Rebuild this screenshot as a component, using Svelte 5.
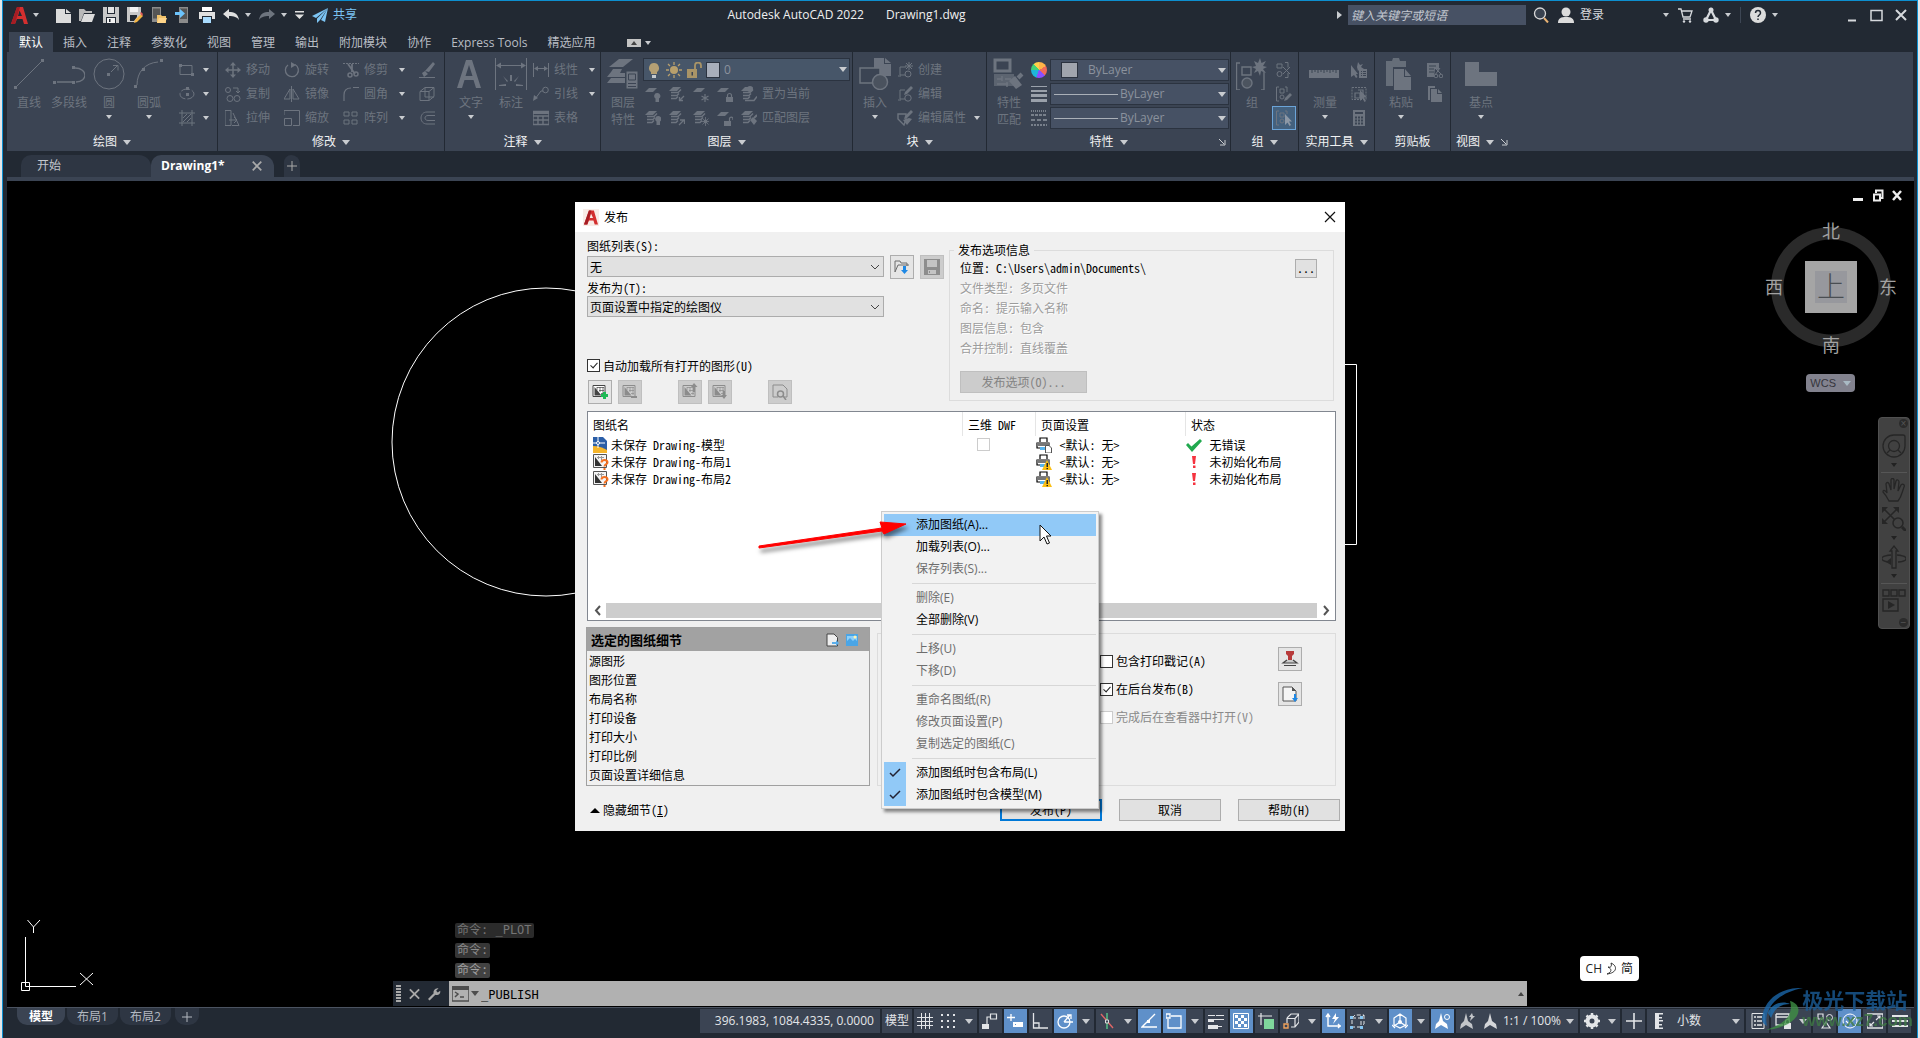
<script lang="ts">
    // stroke-only helper, keeps the icon table short
    const s = (d: string, w = 1, extra = '') =>
        `<path d="${d}" fill="none" stroke="currentColor" stroke-width="${w}" ${extra}/>`;
    const f = (d: string, color = 'currentColor') => `<path d="${d}" fill="${color}"/>`;
    const dots = (pts: number[][]) => pts.map(([x, y]) => f(`M${x} ${y}h3v3h-3z`)).join('');
    const sheet = s('M2 2.5h12v11H2z') + f('M3.5 4v8.500h7z') + s('M6 4v3M9 4v5M12 4v8M6 4.500h7M8 7.500h5M10 10.500h3', 1, 'opacity=".7"');
    const brush = f('M9 10l3-3 4 4-3 4z') + s('M13 8l3-3', 2);
    const layers = (y: number) => f(`M4 ${y}h8l-4 4H0z`);
    const stack = layers(1) + s('M2 6.500h7l3-3M2 9.500h6l2-2M2 12.500h5l2-2', 1.5);

    const icons: Record<string, string> = {
        // quick access
        logo: f('M6 0h6l5 17h-4l-1.500-5H6l-2 5H0zM8.500 3.500L7 9h4z', '#d32f2f') + f('M6 0h3L4 17H0z', '#a61d24'),
        new: f('M1 2h9v5h6v9H1z', '#dcdcdc') + f('M11 2l5 4h-5z', '#dcdcdc'),
        open: f('M0 2h5l2 2h6v2H5l-3 8H0z', '#b9b9b9') + f('M5 7h11l-3 8H2z', '#dcdcdc'),
        save: f('M0 0h16v16H0z', '#c8c8c8') + f('M4 0h8v7H4z', '#222933') + f('M5 0h6v6H5z', '#e4e4e4') + f('M3 10h10v6H3z', '#222933') + f('M4 11h8v5H4z', '#f2f2f2') + f('M6 12h1.500v3H6z', '#222933'),
        saveas: f('M0 0h14v8l-6 7H0z', '#c8c8c8') + f('M3 0h8v5H3z', '#f2f2f2') + f('M3 8h7v2l-3 4H3z', '#222933') + f('M8 13l6-6 2 2-6 6-3 1z', '#f4b544') + f('M13 6l1-1 2 2-1 2z', '#e35a5a'),
        openmobile: f('M1 0h9v15H1z', '#8b8b8b') + f('M2 1.500h7v10H2z', '#555') + f('M6 8h4l1 1h4v7H6z', '#f0c26a') + f('M8 11h8l-2 5H6z', '#ffd58a'),
        savemobile: f('M4 0h9v16H4z', '#8b8b8b') + f('M5 1.500h7v10.500H5z', '#555') + f('M0 5h5V2l5 4.500L5 11V8H0z', '#6cc3fb'),
        print: f('M3 0h10v4H3zM0 5h16v7h-3V9H3v3H0z', '#e0e0e0') + f('M4 10h8v6H4z', '#a9dcff') + f('M3 0h10v4H3z', '#fff'),
        undo: f('M0 7l6-5v3c5 0 9 1.500 10 8-2-3-5-4-10-4v3z', '#e0e0e0'),
        redo: f('M16 7l-6-5v3c-5 0-9 1.500-10 8 2-3 5-4 10-4v3z', '#6d747e'),
        custom: f('M0 4h9v1.500H0zM0 7.500h9L4.500 12z', '#e0e0e0'),
        plane: f('M16 1L0 9l4 2zM16 1L5 11.500V16l3-3zM16 1L9 13l4 2z', '#7cc4f4'),
        mag: '<circle cx="7" cy="6.500" r="5.500" fill="#39424f" stroke="#d8d8d8" stroke-width="1.300"/><path d="M11 11l4 4.500" stroke="#e9b273" stroke-width="2"/>',
        user: '<circle cx="8" cy="5" r="4.500" fill="#dcdcdc"/>' + f('M0 16c0-5 3-6 8-6s8 1 8 6z', '#dcdcdc'),
        cart: s('M0 2h3l2 8h7l2-6H4M5 12h8', 1.3) + '<circle cx="6" cy="14.500" r="1.200" fill="currentColor"/><circle cx="12" cy="14.500" r="1.200" fill="currentColor"/>',
        a360: s('M8 3L3 13h10z', 2.2) + '<circle cx="8" cy="3" r="2.500" fill="currentColor"/><circle cx="3" cy="13" r="2.700" fill="currentColor"/><circle cx="13" cy="13" r="2.700" fill="currentColor"/>',
        help: '<circle cx="8" cy="8" r="8" fill="#dcdcdc"/><path d="M5.500 6c0-3.500 5-3.500 5 0 0 2-2.500 2-2.500 4M8 11.500v1.500" stroke="#222933" stroke-width="1.500" fill="none"/>',
        min: s('M2 12.500h8', 2), max: s('M1 2.500h11v10H1z', 1.5), x: s('M2 2l10 10M12 2L2 12', 2),
        // draw
        line: s('M4 28L28 4') + dots([[1, 28], [28, 1]]),
        pline: s('M4 24h16M22 10c13 0 13 14 1 14', 1.3) + dots([[0, 23], [19, 23], [19, 8]]),
        circle: '<circle cx="16" cy="16" r="15" fill="none" stroke="currentColor"/>' + s('M18 14l6-6M20 7.500h5v5') + dots([[14, 15]]),
        arc: s('M4 27C4 14 12 5 25 4') + dots([[1, 27], [9, 10], [27, 1]]),
        rect: s('M1 3.500h12v9H1z') + dots([[0, 2], [12, 11]]),
        ellipse: '<ellipse cx="8" cy="8" rx="7" ry="5" fill="none" stroke="currentColor" stroke-dasharray="9 2"/>' + dots([[7, 7], [7, 1]]),
        hatch: s('M3 0v16M13 0v16M0 3h16M0 13h16') + s('M4 8l4-4M4 12l8-8M8 12l4-4'),
        // modify
        move: s('M8 2v12M2 8h12', 1.5) + f('M8 0l3 3.500H5zM8 16l3-3.500H5zM0 8l3.500-3v6zM16 8l-3.500-3v6z'),
        rotate: s('M11 2.500A6.500 6.500 0 1 1 4 3', 1.3) + f('M7 0v6l5-3z'),
        trim: s('M0 1.500h16', 1, 'stroke-dasharray="2 1"') + s('M5 2l7 10M9 2v8', 1.8) + '<circle cx="7" cy="13" r="2" fill="none" stroke="currentColor" stroke-width="1.500"/><circle cx="13" cy="12" r="2" fill="none" stroke="currentColor" stroke-width="1.500"/>',
        erase: f('M14 0l2 2-6 8-4-1zM3 11l3-2 3 3-4 3z') + s('M0 15.500h16'),
        copy: '<circle cx="3" cy="4" r="2.500" fill="none" stroke="currentColor"/><circle cx="5" cy="12.500" r="3" fill="none" stroke="currentColor"/><circle cx="12" cy="12.500" r="3" fill="none" stroke="currentColor"/>' + s('M8 2h5v5M11 5l2 2 2-2'),
        mirror: s('M7.500 0v16') + s('M6 3v10H0zM9 3v10h6z'),
        fillet: s('M1 15V9c0-5 3-7 7-7M10 1.500h6M1 15', 1.2),
        explode: s('M1 5.500h9v9H1zM1 5.500l5-4h9l-5 4M15 1.500v9l-5 4M6 2v9h9'),
        stretch: s('M0 .500h6v15H0zM8 3l6 12.500H7') + s('M4 10h8M9 7l3 3-3 3'),
        scale: s('M0 5V.500h15.500v15H9M.500 8.500h7v7h-7z'),
        array: s('M1 2h5v4H1zM9 2h5v4H9zM1 10h5v4H1zM9 10h5v4H9z'),
        offset: s('M16 2H8c-8 0-8 12 0 12h8M16 5.500H9c-4 0-4 5 0 5h7'),
        // annotate
        text: f('M11 2h6l9 28h-5l-2.500-8h-9L7 30H2zM14 7l-3.500 11h7z'),
        dim: s('M.500 0v32M31.500 0v32M2 7.500h28') + f('M1 7.500l5-3v6zM31 7.500l-5-3v6zM15 17h2v6h-2zM8 18l5 5-1 1zM24 18l-5 5 1 1zM4 27l7-1v2H4zM28 27l-7-1v2h7z'),
        linear: s('M.500 1v14M15.500 1v14M2 6.500h12') + f('M1 6.500l4-2.500v5zM15 6.500L11 4v5z'),
        leader: '<circle cx="12.500" cy="4" r="2.800" fill="none" stroke="currentColor"/>' + s('M10 5H8L2 13') + f('M0 15l1-6 4 3z'),
        table: s('M0 1.500h16v13H0zM0 6h16M0 10h16M5 6v8M10 6v8', 1.4) + f('M0 1h16v3H0z'),
        // layers
        layerprop: f('M12 1h14l-10 8H2z') + f('M6 11h9l-2 4h5v4H0l4-5zM4 20h14v5H0z') + '<path d="M19 13h12v18H19z" fill="currentColor" stroke="#3b4453"/>' + '<path d="M21.500 16h7v6h-7zM21 25.500h8M21 28.500h8" fill="none" stroke="#3b4453"/>',
        bulb: f('M8 1a5 5 0 0 1 3 9v2H5v-2a5 5 0 0 1 3-9z', '#b5a074') + f('M6 13h4v3H6z', '#c4c9ce'),
        sun: '<circle cx="8" cy="8" r="4" fill="#b89f6c"/><path d="M8 0v3M8 13v3M0 8h3M13 8h3M2 2l2 2M12 12l2 2M14 2l-2 2M2 14l2-2" stroke="#b89f6c" stroke-width="1.300"/>',
        unlock: f('M1 7h10v9H1z', '#a99467') + '<path d="M9 8V3.500a3 3 0 0 1 6 0V6" fill="none" stroke="#a99467" stroke-width="1.800"/>' + f('M5.500 10h1.500v3.500H5.500z', '#3b4453'),
        loff: layers(2) + f('M12 7a3 3 0 0 1 2 5.500V16h-3.500v-3.500A3 3 0 0 1 12 7z'),
        liso: stack + s('M15 10l-4 4M10.500 11v3.500H14', 1.3),
        lfreeze: layers(2) + s('M12 8v8M8.500 10l7 4M15.500 10l-7 4', 1.2),
        llock: layers(2) + f('M9 11h7v5H9z') + s('M10.500 11V9.500a2 2 0 0 1 4 0V11', 1.2),
        lcur: stack + '<circle cx="9" cy="3" r="3" fill="currentColor"/>' + s('M4 14.500h9l3-4', 1.5),
        lon: stack + f('M13 6a3 3 0 0 1 2 5.500V15h-3.500v-3.500A3 3 0 0 1 13 6z'),
        luniso: stack + s('M10 15l5-5M11 10h4.500v4', 1.3),
        lthaw: stack + '<circle cx="12.500" cy="11.500" r="2" fill="currentColor"/>' + s('M12.500 7v9M8 11.500h9M9.500 8.500l6 6M15.500 8.500l-6 6', .8),
        lunlock: layers(2) + f('M7 11h7v5H7z') + s('M12.500 11V8.500a1.800 1.800 0 0 1 3.500 0V10', 1.2),
        lmatch: stack + brush,
        // block
        insert: f('M15 0h10v6h7v12H15z', '#6b727e') + '<path d="M26 0l6 5h-6z" fill="currentColor"/><path d="M1 10h20v15H1z" fill="#3b4453" stroke="currentColor" stroke-width="1.500"/><circle cx="21" cy="24" r="7.500" fill="#4a525e" stroke="currentColor" stroke-width="1.500"/>',
        bcreate: s('M9 5H3v8h5M1 14h3') + '<circle cx="11" cy="12" r="3" fill="none" stroke="currentColor"/>' + s('M12 0v8M8 4h8M9 1l6 6M15 1L9 7'),
        bedit: s('M8 4H3v9h5M1 14h3') + '<circle cx="11" cy="12" r="3.200" fill="none" stroke="currentColor"/>' + f('M7 9l1-3 6-6 2 2-6 6z'),
        battr: s('M1 4h8v5l-2 6-6-6z', 1.4) + f('M7 9l1-3 6-6 2 2-6 6zM6 10l4 5 5-6-3-1z'),
        // properties
        matchprop: s('M2 2h15v11H2z', 3) + f('M1 16h20v12H1z', '#5c6470') + s('M4 21h5M12 21h6M9 18v5M4 26h11M14 24v5', 1.4) + f('M16 23l6-5 7 9-6 4z') + s('M25 20l4-4', 4),
        lweight: f('M0 0h16v1H0zM0 4h16v2H0zM0 8h16v3H0zM0 13h16v4H0z', '#9aa1ab'),
        ltype: '<path d="M0 1h16" stroke="#8d949e" stroke-dasharray="1 1" stroke-width="1.500"/><path d="M0 5h16" stroke="#8d949e" stroke-dasharray="3 1" stroke-width="1.500"/><path d="M0 10h16" stroke="#8d949e" stroke-dasharray="4 2" stroke-width="1.500"/><path d="M0 15h16" stroke="#8d949e" stroke-dasharray="2 1" stroke-width="1.500"/>',
        // groups, utilities, clipboard, view
        group: s('M4 5H.500v27H4M28 14v18h-3M6 9h9v8H6z', 1.4) + '<circle cx="11" cy="25" r="5" fill="#4c545f" stroke="currentColor" stroke-width="1.400"/>' + f('M24 0l1.500 5L30 3l-3 5 4 1-4 2 3 4-5-2-1 5-2-5-4 2 2-4-4-2 4-1-2-5 4 2z'),
        ungroup: s('M1 2h5v4H1zM9 .500h3v5M12 11v4.500H9M7 5l7 7M14 5l-7 7') + '<circle cx="3.500" cy="12" r="2.500" fill="none" stroke="currentColor"/>',
        groupedit: s('M3 1H.500v14H3M9 1h2v5M4 3h4v4H4z') + '<circle cx="6" cy="11" r="2" fill="none" stroke="currentColor"/>' + f('M8 15l1-3 5-5 2 2-5 5z'),
        groupsel: s('M3 1H.500v14H3M9 1h2v3M4 3h4v4H4z') + '<circle cx="6" cy="11" r="2" fill="none" stroke="currentColor"/>' + f('M9 4v11l2.500-2.500 2 3.500 1.500-1-2-3.500H16z', '#8d98a6'),
        ruler: f('M0 12h30v8H0z') + '<path d="M3 12v3M6 12v2M9 12v3M12 12v2M15 12v3M18 12v2M21 12v3M24 12v2M27 12v3" stroke="#3b4453"/>',
        qselect: f('M0 3v12l3-2 2 3 1.500-1L5 12h2zM7 0l2 3 3-1-2 3 3 2H9L7 9 6 5zM8 7h8v9H8z') + '<path d="M10 9.500h1M12 9.500h3M10 11.500h1M12 11.500h3M10 13.500h1M12 13.500h3" stroke="#3b4453"/>',
        selall: s('M1 1.500h14v12H1z', 1, 'stroke-dasharray="2 1"') + s('M4 7h5v5H4zM7 4h5v6', 1.2) + f('M9 4v11l2.500-2.500 2 3.500 1.500-1-2-3.500H16z'),
        calc: f('M2 0h12v16H2z') + '<path d="M4 2h8v2H4z" fill="#3b4453"/><path d="M4 7.500h8M4 10.500h8M4 13.500h8" stroke="#3b4453" stroke-width="2" stroke-dasharray="2 1"/>',
        paste: f('M1 3h6l1-3h6l1 3h6v6H8v19H1z', '#666e79') + f('M9 11h10v8h7v13H9z') + f('M20 11l6 7h-6z'),
        cut: f('M0 1h12v7L8 7l-1 8H0z', '#6b727d') + '<path d="M2 4h7M2 7h5M2 10h5" stroke="#3b4453"/>' + s('M7 5l7 7M13 6l-5 7') + '<circle cx="9" cy="14" r="1.800" fill="none" stroke="currentColor"/><circle cx="14" cy="14" r="1.800" fill="none" stroke="currentColor"/>',
        copyclip: f('M1 0h7v2H3v12H1zM4 3h6v5h5v8H4zM11 3l4 4h-4z'),
        base: f('M0 4h14v10h18v14H0z'),
        launch: s('M1 1l5 5M2 7h5V2') ,
        // dialog
        load: '<path d="M1 13V2h5l1 2h6v3" fill="none" stroke="#6d6d6d"/><path d="M1 13l3-7h11" fill="none" stroke="#6d6d6d"/>' + f('M9 7h3v4h2l-3.500 4L7 11h2z', '#1e88e5'),
        disk: f('M0 0h16v16H0z', '#8d8d8d') + f('M3 1h10v7H3z', '#c4c4c4') + f('M4 11h8v4H4z', '#c4c4c4') + f('M5 12h1v2H5z', '#8d8d8d'),
        sheetadd: f('M2 2h12v12H2z', '#fff') + sheet + f('M10 11h2V9h3v2h2v3h-2v2h-3v-2h-2z', '#1db954'),
        sheetdel: sheet + f('M10 13h6v2h-6z'),
        sheetup: sheet + f('M12 9V4h-2l3-4 3.500 4H14v5z'),
        sheetdown: sheet + f('M12 8h2v4h2l-3 4-3-4h2z'),
        preview: s('M1 1h10l4 4v8h-3M1 1v12h5') + '<circle cx="8.500" cy="10" r="3" fill="none" stroke="currentColor" stroke-width="1.500"/>' + s('M11 12l3 4', 1.5),
        model: f('M0 0h10l4 4v12H0z', '#2b5ea7') + f('M0 9c6 0 10 2 14 4v3H0z', '#f5b52b') + '<path d="M5 0v11M0 6h12" stroke="#fff"/>' + '<circle cx="5" cy="6" r="1.500" fill="#2b5ea7" stroke="#fff"/>',
        layout: '<path d="M.500.500h13v13H.500z" fill="#f4f4f4" stroke="#555"/>' + f('M2 3v9h7z', '#333') + '<path d="M5.500 2v3M8.500 2v4M4 3.500h7" stroke="#999"/>' + '<path d="M8.500 8.500c0-3.500 6-3.500 6 0 0 2-3 1.500-3 4M11.500 14v2" fill="none" stroke="#f37021" stroke-width="2"/>',
        plot: s('M4 5V1h7v4M1 6h12v5H1z', 1.2) + f('M1 6h13v3H1z', '#777') + f('M4 10h5v3H4z', '#58b4ee') + '<path d="M9.500 8.500h3.500l2.500 2.500v5h-6z" fill="#fff" stroke="#555"/>',
        plotwarn: s('M4 5V1h7v4M1 6h12v5H1z', 1.2) + f('M1 6h13v3H1z', '#777') + f('M4 10h5v3H4z', '#58b4ee') + f('M11 6l5 10H6z', '#fcbf12') + f('M10.500 9h1.500v4h-1.500zM10.500 14h1.500v1.200h-1.500z', '#222'),
        ok: f('M0 8l2-2 3.500 3.500L14 2l2 2-10 11z', '#21a94f'),
        bang: f('M6 2h4l-1 8H7zM7 11.500h2.500v2.500H7z', '#f5333f'),
        doc: '<path d="M1 1h7l3.500 3.500V13H1z" fill="#eee" stroke="#444"/>' + f('M6 9h4V7l3 3-3 3v-2H6z', '#5aaeea'),
        image: f('M0 0h12v12H0z', '#4aa5e6') + f('M1 7l3-3 3 3 2-2 2 2v-5H1z', '#8ed0fa') + '<circle cx="9" cy="3" r="1.500" fill="#fff3b0"/>',
        stamp: f('M5 0h8v3l-2 2v4H7V5L5 3z', '#b73a3a') + f('M3 10l3-1h6l3 1 1 2H2z', '#c9c9c9') + s('M6 9L2 12h14l-4-3M3 14.500h12', 1.2),
        docdown: '<path d="M1 1h9l4 4v10H1z" fill="#f5f5f5" stroke="#555"/>' + f('M10 1l4 4h-4z', '#555') + f('M12 8h2v4h2l-3 4-3-4h2z', '#1e88e5'),
        // status bar
        grid: s('M0 4.500h16M0 8.500h16M0 12.500h16M4.500 0v16M8.500 0v16M12.500 0v16'),
        snap: [1, 7, 13].map((y) => [1, 7, 13].map((x) => f(`M${x} ${y}h2v2h-2z`)).join('')).join(''),
        infer: s('M8.500 1h6v5h-6zM8 4H5v7', 1.2) + f('M0 11h7v5H0z'),
        dyn: s('M4 1v7M0 4.500h8', 1.3) + f('M6 9h10v5H6z') + '<path d="M8 11h1v1H8z" fill="#5f90c9"/>',
        ortho: s('M1.500 0v15H16M2 10h5v5', 1.3),
        polar: '<circle cx="7" cy="9" r="6" fill="none" stroke="currentColor" stroke-width="1.300"/>' + s('M7 9h9M7 9l6-7M10 2h4v4', 1.3),
        iso: '<path d="M8 0v16" stroke="#58c98a" stroke-width="1.400"/><path d="M2 1l12 14" stroke="#e06767" stroke-width="1.400"/><path d="M6.500 7h3v3h-3z" fill="#3b4453" stroke="#ddd"/>',
        otrack: s('M14 1L1 14h15', 1.4) + f('M6 7h3v3H6z'),
        osnap: s('M5 3h10v12H2V6', 1.3) + s('M0 1h4v4H0z', 1.3),
        lwt: f('M0 2h7v1H0zM8 2h8v1H8zM0 6h6v3H0zM6 6h10v1H6zM0 12h10v4H0zM10 13h4v1h-4z'),
        trans: s('M.500 .500h15v15H.500z') + [0, 1, 2, 3].map((r) => [0, 1].map((c) => f(`M${2 + c * 6 + (r % 2) * 3} ${2 + r * 3}h3v3h-3z`)).join('')).join(''),
        cycle: s('M3 0v6M0 3h6M3 6v6M6 3h8', 1.2) + f('M6 6h10v10H6z', '#7fd79c'),
        osnap3d: s('M4 5.500h8v8M4 5v5M4 5l4-4h8l-4 4.500M16 1v8l-4 5H8', 1.2) + '<path d="M1 11h4v4H1z" fill="none" stroke="#f0a15c" stroke-width="1.400"/>',
        ducs: s('M3 1v12h13M1 4l2-3 2 3M13 11l2 2-2 2', 1.4) + f('M11 0L7 6h3l-2 5 6-7h-3z'),
        filter: s('M2 5h9v9H2zM2 5l3-3h9l-3 3M14 2v9l-3 3', 1, 'stroke-dasharray="4 2"') + f('M0 3h3v3H0zM10 3h3v3h-3zM0 13h3v3H0zM10 13h3v3h-3z', '#86c5f0'),
        gizmo: s('M8 1l6 4v7l-6 3-6-3V5zM8 1v8M8 9l-6 4M8 9l6 4', 1.2) + '<circle cx="8" cy="9" r="2" fill="currentColor"/>' + s('M0 12l3 3M16 12l-3 3', 1.2),
        annvis: f('M7 0l2 8 4 3 1 5-7-4-6 4 1-5 3-3z') + '<circle cx="13" cy="4" r="2.500" fill="none" stroke="currentColor"/>',
        annauto: f('M7 0l2 8 4 3 1 5-7-4-6 4 1-5 3-3zM13 0l-3 4h2l-1 4 5-5h-2z', '#c2c5c9'),
        annscale: f('M8 0l2 8 4 3 1 5-7-4-6 4 1-5 3-3z', '#d4d6d9'),
        gear: '<circle cx="8" cy="8" r="4.500" fill="none" stroke="currentColor" stroke-width="4"/><path d="M8 0v3M8 13v3M0 8h3M13 8h3M2.500 2.500l2 2M11.500 11.500l2 2M13.500 2.500l-2 2M2.500 13.500l2-2" stroke="currentColor" stroke-width="2.500"/>',
        plus: s('M8 0v16M0 8h16', 1.6),
        units: f('M4 0h4v16H4zM8 0h4v1.500H8zM8 4h3v1.500H8zM8 7h4v1.500H8zM8 11h3v1.500H8zM8 14.500h4V16H8z'),
        quick: s('M2 .500h12v15H2z') + s('M4 4h2M7 4h5M4 8h2M7 8h5M4 12h2M7 12h5', 1.5),
        lockui: s('M1 1h13v6M1 1v11h7M1 4h13', 1.3) + f('M9 10h7v6H9z') + s('M10.500 10V8.500a2 2 0 0 1 4 0V10', 1.2),
        isolate: s('M1 1h5v5H1zM5 15l4-6 4 6z', 1.2) + '<circle cx="12.500" cy="4.500" r="3" fill="none" stroke="currentColor"/>',
        hw: '<circle cx="8" cy="8" r="7" fill="none" stroke="currentColor"/>' + s('M4 8l3 3 6-6', 1.2),
        clean: s('M0 1h16v14H0z', 1.3) + s('M9 7l4-4M10 3h3v3M7 9l-4 4M3 10v3h3', 1.2),
        menu: s('M0 3h16M0 8h16M0 13h16', 2),
        // navigation bar
        wheel: s('M12 1h9a2 2 0 0 1 2 2v9A11 11 0 1 1 12 1z', 1.3) + '<circle cx="12" cy="12" r="5.500" fill="none" stroke="currentColor" stroke-width="1.300"/>' + s('M8 16l-3 3M16 16l3 3', 1.3),
        hand: s('M7 23c-2-4-3-6-6-9 0-3 3-1 4 1L4 6c0-2 3-2 3 0l2 6V2c0-2 3-2 3 0v9l2-8c1-2 3-1 3 1l-1 9 3-6c2-2 4 0 3 2-2 5-2 9-6 14z', 1.3),
        zoom: s('M2 2l13 13M15 2L2 15', 1.5) + f('M0 0h6L0 6zM17 0h-6l6 6zM0 17v-6l6 6z') + '<circle cx="16" cy="16" r="5" fill="#414141" stroke="currentColor" stroke-width="1.500"/>' + s('M20 20l4 4', 3),
        orbit: s('M10 23V6H8l4-5 4 5h-2v17z', 1.3) + s('M9 10c-12 1-12 6-2 7M15 10c12 1 12 6 1 7', 1.5) + f('M4 17l5-4v7z'),
        motion: s('M1 1h6v6H1zM9 1h6v6H9zM17 1h6v6h-6zM1 10h15v12H1z', 1.4) + f('M6 12l7 4-7 4z'),
        wrench: f('M0 14l7-7c-1-3 2-7 6-6l-3 3 2 2 3-2c1 4-3 6-6 5l-7 7z'),
        term: s('M0 1h17v14H0zM3 6l3 2-3 3M8 11h4', 1.5) + f('M0 0h17v4H0z'),
    };

    const ribbonTabs = ['默认', '插入', '注释', '参数化', '视图', '管理', '输出', '附加模块', '协作', 'Express Tools', '精选应用'];
    const rows = [
        { icon: 'model', name: '未保存 Drawing-模型', dwf: true, plot: 'plot', stat: 'ok', msg: '无错误' },
        { icon: 'layout', name: '未保存 Drawing-布局1', dwf: false, plot: 'plotwarn', stat: 'bang', msg: '未初始化布局' },
        { icon: 'layout', name: '未保存 Drawing-布局2', dwf: false, plot: 'plotwarn', stat: 'bang', msg: '未初始化布局' },
    ];
    const details = ['源图形', '图形位置', '布局名称', '打印设备', '打印大小', '打印比例', '页面设置详细信息'];
    const info = ['文件类型: 多页文件', '命名: 提示输入名称', '图层信息: 包含', '合并控制: 直线覆盖'];
    const menu = [
        [{ t: '添加图纸(A)...', hot: true }, { t: '加载列表(O)...' }, { t: '保存列表(S)...', off: true }],
        [{ t: '删除(E)', off: true }, { t: '全部删除(V)' }],
        [{ t: '上移(U)', off: true }, { t: '下移(D)', off: true }],
        [{ t: '重命名图纸(R)', off: true }, { t: '修改页面设置(P)', off: true }, { t: '复制选定的图纸(C)', off: true }],
        [{ t: '添加图纸时包含布局(L)', check: true }, { t: '添加图纸时包含模型(M)', check: true }],
    ] as { t: string; hot?: boolean; off?: boolean; check?: boolean }[][];
    const status = [
        { i: ['grid', 'snap'], arrow: true }, { i: ['infer'] }, { i: ['dyn'], on: true }, { i: ['ortho'] },
        { i: ['polar'], on: true, arrow: true }, { i: ['iso'], arrow: true }, { i: ['otrack'], on: true },
        { i: ['osnap'], on: true, arrow: true }, { i: ['lwt'] }, { i: ['trans'], on: true }, { i: ['cycle'] },
        { i: ['osnap3d'], arrow: true }, { i: ['ducs'], on: true }, { i: ['filter'], arrow: true },
        { i: ['gizmo'], on: true, arrow: true }, { i: ['annvis'], on: true },
        { i: ['annauto', 'annscale'], label: '1:1 / 100%', arrow: true }, { i: ['gear'], arrow: true }, { i: ['plus'] },
        { i: ['units'], label: '小数', arrow: true, wide: true }, { i: ['quick'] }, { i: ['lockui'], arrow: true },
        { i: ['isolate'] }, { i: ['hw'], on: true }, { i: ['clean'] }, { i: ['menu'] },
    ] as { i: string[]; on?: boolean; arrow?: boolean; label?: string; wide?: boolean }[];
</script>

{#snippet icon(name: string, w = 16, h = w)}
    <svg width={w} height={h} viewBox="0 0 {w} {h}" aria-hidden="true">{@html icons[name]}</svg>
{/snippet}

{#snippet big(name: string, label: string, arrow = false, second = '')}
    <button class="big">
        {@render icon(name, 32)}
        <span>{label}</span>
        {#if second}<span>{second}</span>{/if}
        {#if arrow}<i class="caret"></i>{/if}
    </button>
{/snippet}

{#snippet tool(name: string, label = '', arrow = false, on = false)}
    <button class="tool" class:on>
        {@render icon(name)}
        {#if label}<span>{label}</span>{/if}
        {#if arrow}<i class="caret"></i>{/if}
    </button>
{/snippet}

{#snippet title(text: string, arrow = true, launch = false)}
    <div class="ptitle">
        <span>{text}</span>
        {#if arrow}<i class="caret large"></i>{/if}
        {#if launch}<button class="launch" aria-label="{text}设置">{@render icon('launch', 8)}</button>{/if}
    </div>
{/snippet}

<div class="window">
    <header class="titlebar">
        <div class="quick">
            <button aria-label="应用程序菜单" class="app-btn">{@render icon('logo', 17)}<i class="caret"></i></button>
            {#each ['new', 'open', 'save', 'saveas', 'openmobile', 'savemobile', 'print'] as q}
                <button aria-label={q}>{@render icon(q)}</button>
            {/each}
            <button aria-label="undo">{@render icon('undo')}<i class="caret"></i></button>
            <button aria-label="redo">{@render icon('redo')}<i class="caret"></i></button>
            <button aria-label="custom">{@render icon('custom', 9, 16)}</button>
            <button class="share">{@render icon('plane')}共享</button>
        </div>
        <div class="caption"><span>Autodesk AutoCAD 2022</span><span>Drawing1.dwg</span></div>
        <div class="account">
            <i class="caret side"></i>
            <input type="text" placeholder="键入关键字或短语" aria-label="搜索" />
            <button aria-label="查找">{@render icon('mag')}</button>
            <button class="login">{@render icon('user')}登录<i class="caret"></i></button>
            <button aria-label="商店">{@render icon('cart')}</button>
            <button aria-label="应用">{@render icon('a360')}<i class="caret"></i></button>
            <button aria-label="帮助" class="help">{@render icon('help')}<i class="caret"></i></button>
        </div>
        <div class="sys">
            <button aria-label="最小化">{@render icon('min', 14)}</button>
            <button aria-label="最大化">{@render icon('max', 14)}</button>
            <button aria-label="关闭">{@render icon('x', 14)}</button>
        </div>
    </header>

    <nav class="tabs">
        {#each ribbonTabs as tab, i}
            <button class:active={i === 0}>{tab}</button>
        {/each}
        <button class="collapse" aria-label="最小化面板"><span><i class="caret up"></i></span><i class="caret"></i></button>
    </nav>

    <div class="ribbon">
        <section class="panel draw">
            <div class="tools">
                {@render big('line', '直线')}
                {@render big('pline', '多段线')}
                {@render big('circle', '圆', true)}
                {@render big('arc', '圆弧', true)}
                <div class="col">
                    {@render tool('rect', '', true)}
                    {@render tool('ellipse', '', true)}
                    {@render tool('hatch', '', true)}
                </div>
            </div>
            {@render title('绘图')}
        </section>
        <section class="panel modify">
            <div class="tools">
                <div class="col">{@render tool('move', '移动')}{@render tool('copy', '复制')}{@render tool('stretch', '拉伸')}</div>
                <div class="col">{@render tool('rotate', '旋转')}{@render tool('mirror', '镜像')}{@render tool('scale', '缩放')}</div>
                <div class="col">{@render tool('trim', '修剪', true)}{@render tool('fillet', '圆角', true)}{@render tool('array', '阵列', true)}</div>
                <div class="col">{@render tool('erase')}{@render tool('explode')}{@render tool('offset')}</div>
            </div>
            {@render title('修改')}
        </section>
        <section class="panel note">
            <div class="tools">
                {@render big('text', '文字', true)}
                {@render big('dim', '标注')}
                <div class="col">{@render tool('linear', '线性', true)}{@render tool('leader', '引线', true)}{@render tool('table', '表格')}</div>
            </div>
            {@render title('注释')}
        </section>
        <section class="panel layer">
            <div class="tools">
                {@render big('layerprop', '图层', false, '特性')}
                <div class="col grow">
                    <div class="combo lit">
                        {@render icon('bulb')}{@render icon('sun')}{@render icon('unlock')}
                        <i class="swatch"></i>
                        <select aria-label="图层"><option>0</option></select>
                        <i class="caret large"></i>
                    </div>
                    <div class="line">
                        {#each ['loff', 'liso', 'lfreeze', 'llock'] as l}{@render tool(l)}{/each}
                        {@render tool('lcur', '置为当前')}
                    </div>
                    <div class="line">
                        {#each ['lon', 'luniso', 'lthaw', 'lunlock'] as l}{@render tool(l)}{/each}
                        {@render tool('lmatch', '匹配图层')}
                    </div>
                </div>
            </div>
            {@render title('图层')}
        </section>
        <section class="panel block">
            <div class="tools">
                {@render big('insert', '插入', true)}
                <div class="col">{@render tool('bcreate', '创建')}{@render tool('bedit', '编辑')}{@render tool('battr', '编辑属性', true)}</div>
            </div>
            {@render title('块')}
        </section>
        <section class="panel props">
            <div class="tools">
                {@render big('matchprop', '特性', false, '匹配')}
                <div class="col grow">
                    <div class="prop">
                        <i class="colors"></i>
                        <div class="combo"><i class="swatch wide"></i><select aria-label="颜色"><option>ByLayer</option></select><i class="caret large"></i></div>
                    </div>
                    <div class="prop">
                        {@render icon('lweight')}
                        <div class="combo"><i class="rule"></i><select aria-label="线宽"><option>ByLayer</option></select><i class="caret large"></i></div>
                    </div>
                    <div class="prop">
                        {@render icon('ltype')}
                        <div class="combo"><i class="rule"></i><select aria-label="线型"><option>ByLayer</option></select><i class="caret large"></i></div>
                    </div>
                </div>
            </div>
            {@render title('特性', true, true)}
        </section>
        <section class="panel grp">
            <div class="tools">
                {@render big('group', '组')}
                <div class="col">{@render tool('ungroup')}{@render tool('groupedit')}{@render tool('groupsel', '', false, true)}</div>
            </div>
            {@render title('组')}
        </section>
        <section class="panel util">
            <div class="tools">
                {@render big('ruler', '测量', true)}
                <div class="col">{@render tool('qselect')}{@render tool('selall')}{@render tool('calc')}</div>
            </div>
            {@render title('实用工具')}
        </section>
        <section class="panel clip">
            <div class="tools">
                {@render big('paste', '粘贴', true)}
                <div class="col">{@render tool('cut')}{@render tool('copyclip')}</div>
            </div>
            {@render title('剪贴板', false)}
        </section>
        <section class="panel view">
            <div class="tools">{@render big('base', '基点', true)}</div>
            {@render title('视图', true, true)}
        </section>
    </div>

    <nav class="files">
        <button class="file start">开始</button>
        <button class="file current">Drawing1*{@render icon('x', 14)}</button>
        <button class="file add" aria-label="新图形">{@render icon('plus')}</button>
    </nav>

    <main>
        <svg class="drawing" width="100%" height="100%" aria-hidden="true">
            <g fill="none" stroke="#fff">
                <circle cx="539" cy="261" r="154" />
                <path d="M900 183.500h449.500v180H900" />
                <path d="M18.500 756v49.500H69M14.500 801.500h8v8h-8zM20.500 739l6 7v6M33 739l-6.500 7M73 792l13 12M86 792l-13 12" />
            </g>
        </svg>

        <div class="docbtns">
            <svg width="52" height="14"><path d="M0 9h10v3H0z" fill="#eee" /><path d="M21 5.500h6v6h-6zM23 4V1.500h6.500V9H28" fill="none" stroke="#eee" stroke-width="2" /><path d="M40 2l8 9M48 2l-8 9" stroke="#eee" stroke-width="2.500" /></svg>
        </div>
        <div class="cube">
            <span class="n">北</span><span class="w">西</span><span class="face">上</span><span class="e">东</span><span class="s">南</span>
        </div>
        <button class="wcs">WCS <i></i></button>
        <div class="navbar">
            <i class="dot">×</i>
            {@render icon('wheel', 24)}<i class="caret"></i>
            <hr />
            {@render icon('hand', 24)}
            {@render icon('zoom', 24)}<i class="caret"></i>
            {@render icon('orbit', 24)}<i class="caret"></i>
            <hr />
            {@render icon('motion', 24)}
            <i class="dot last">−</i>
        </div>

        <div class="dialog" role="dialog" aria-label="发布">
            <div class="dhead">
                <span class="dlogo">{@render icon('logo', 17)}</span>发布
                <button aria-label="关闭"><svg width="12" height="12"><path d="M1 1l10 10M11 1L1 11" stroke="#111" stroke-width="1.200" /></svg></button>
            </div>
            <div class="dbody">
                <div class="upper">
                    <div class="left">
                        <label for="list">图纸列表(S):</label>
                        <div class="pick">
                            <div class="drop"><select id="list"><option>无</option></select><svg width="10" height="6"><path d="M1 1l4 4 4-4" fill="none" stroke="#444" /></svg></div>
                            <button class="sq" aria-label="加载图纸列表">{@render icon('load')}</button>
                            <button class="sq" disabled aria-label="保存图纸列表">{@render icon('disk')}</button>
                        </div>
                        <label for="to">发布为(T):</label>
                        <div class="drop"><select id="to"><option>页面设置中指定的绘图仪</option></select><svg width="10" height="6"><path d="M1 1l4 4 4-4" fill="none" stroke="#444" /></svg></div>
                        <label class="chk auto"><input type="checkbox" checked />自动加载所有打开的图形(U)</label>
                        <div class="sheetbar">
                            <button class="sq" aria-label="添加图纸">{@render icon('sheetadd', 18)}</button>
                            <button class="sq" disabled aria-label="删除图纸">{@render icon('sheetdel', 18)}</button>
                            <button class="sq gap" disabled aria-label="上移图纸">{@render icon('sheetup', 18)}</button>
                            <button class="sq" disabled aria-label="下移图纸">{@render icon('sheetdown', 18)}</button>
                            <button class="sq gap" disabled aria-label="预览">{@render icon('preview')}</button>
                        </div>
                    </div>
                    <fieldset class="options">
                        <legend>发布选项信息</legend>
                        <p class="loc">位置: C:\Users\admin\Documents\<button aria-label="浏览">...</button></p>
                        {#each info as line}<p class="dim">{line}</p>{/each}
                        <button class="push" disabled>发布选项(O)...</button>
                    </fieldset>
                </div>

                <div class="list">
                    <table>
                        <thead>
                            <tr><th class="c1">图纸名</th><th class="c2">三维 DWF</th><th class="c3">页面设置</th><th>状态</th></tr>
                        </thead>
                        <tbody>
                            {#each rows as r}
                                <tr>
                                    <td><div>{@render icon(r.icon)}{r.name}</div></td>
                                    <td>{#if r.dwf}<input type="checkbox" disabled aria-label="三维 DWF" />{/if}</td>
                                    <td><div class="far">{@render icon(r.plot)}&lt;默认: 无&gt;</div></td>
                                    <td><div class="far">{@render icon(r.stat)}{r.msg}</div></td>
                                </tr>
                            {/each}
                        </tbody>
                    </table>
                    <div class="scroll">
                        <svg width="17" height="15"><path d="M11 3L7 7.500l4 4.500" fill="none" stroke="#555" stroke-width="2" /></svg>
                        <i></i>
                        <svg width="17" height="15"><path d="M7 3l4 4.500L7 12" fill="none" stroke="#555" stroke-width="2" /></svg>
                    </div>
                </div>

                <div class="lower">
                    <div class="details">
                        <div class="dtitle">选定的图纸细节<span>{@render icon('doc', 14)}{@render icon('image', 12)}</span></div>
                        <ul>{#each details as d}<li>{d}</li>{/each}</ul>
                    </div>
                    <div class="output">
                        <div class="checks">
                            <label class="chk"><input type="checkbox" />包含打印戳记(A)</label>
                            <label class="chk"><input type="checkbox" checked />在后台发布(B)</label>
                            <label class="chk dim"><input type="checkbox" disabled />完成后在查看器中打开(V)</label>
                        </div>
                        <div class="outbtns">
                            <button class="sq" aria-label="打印戳记设置">{@render icon('stamp', 18, 16)}</button>
                            <button class="sq" aria-label="后台发布">{@render icon('docdown')}</button>
                        </div>
                    </div>
                </div>

                <div class="foot">
                    <button class="hide"><i></i><span>隐藏细节(<u>I</u>)</span></button>
                    <button class="push primary">发布(P)</button>
                    <button class="push">取消</button>
                    <button class="push">帮助(H)</button>
                </div>
            </div>
        </div>

        <div class="menu" role="menu">
            {#each menu as group, g}
                {#if g}<hr />{/if}
                {#each group as item}
                    <button role="menuitem" class:hot={item.hot} disabled={item.off}>
                        <span class="tick" class:check={item.check}>
                            {#if item.check}<svg width="12" height="10"><path d="M1 5l3 3 7-7" fill="none" stroke="#223" stroke-width="1.500" /></svg>{/if}
                        </span>{item.t}
                    </button>
                {/each}
            {/each}
        </div>

        <svg class="pointer" width="160" height="44" aria-hidden="true">
            <path d="M5 27L128 9l-2-6 26 2-22 10-2-3L5 29z" fill="red" stroke="red" stroke-linejoin="round" />
        </svg>
        <svg class="cursor" width="14" height="22" aria-hidden="true">
            <path d="M1 1v16l4-4 3 7 2.500-1-3-7H12z" fill="#fff" stroke="#111" />
        </svg>

        <div class="ime">CH <svg width="11" height="13"><path d="M5 1c7 3 6 10-4 11 5-2 5-5 1-7 3 1 4-1 3-4z" fill="none" stroke="#333" /></svg> 简</div>

        <div class="history">
            <p class="old">命令: _PLOT</p>
            <p class="mid">命令:</p>
            <p>命令:</p>
        </div>
        <div class="command">
            <div class="cgrip"><i></i>{@render icon('x', 14)}{@render icon('wrench')}</div>
            <div class="cline">{@render icon('term', 17, 16)}<i class="caret large"></i><input type="text" value="_PUBLISH" aria-label="命令行" /><i class="caret up"></i></div>
        </div>
    </main>

    <footer>
        <div class="layouts">
            <button class="active">模型</button>
            <button>布局1</button>
            <button>布局2</button>
            <button class="addlayout" aria-label="新建布局">{@render icon('plus')}</button>
        </div>
        <div class="statusbar">
            <span class="coords">396.1983, 1084.4335, 0.0000</span>
            <button class="cell space">模型</button>
            {#each status as c}
                <button class="cell" class:wide={c.wide} aria-label={c.label ?? c.i[0]}>
                    {#each c.i as n}<span class="ico" class:on={c.on}>{@render icon(n)}</span>{/each}
                    {#if c.label}<span class="label">{c.label}</span>{/if}
                    {#if c.arrow}<i class="caret large"></i>{/if}
                </button>
            {/each}
        </div>
    </footer>

    <div class="watermark">
        <svg width="44" height="44" viewBox="0 0 44 44">
            <path d="M43 0C20-1 4 12 2 30c0 5 3 7 5 8C3 22 16 5 43 0z" fill="#1b66a8" />
            <path d="M8 25c3-9 14-13 22-9-8 0-15 3-19 14z" fill="#1f6fb0" />
            <path d="M30 13c16 4 10 26-24 29 18-6 28-14 24-29z" fill="#3f8f45" />
        </svg>
        <div><strong>极光下载站</strong><span>www.xz7.com</span></div>
    </div>
</div>

<style>
    :global(body) {
        background: #e4e7ea;
        font: 12px/16px 'Open Sans', 'Noto Sans CJK SC', sans-serif;
    }

    .window {
        position: relative;
        display: flex;
        flex-direction: column;
        height: 100vh;
        box-sizing: border-box;
        margin: 0 2px;
        border: 1px solid #0d8fd0;
        border-bottom: 0;
        padding: 0 3px 0 4px;
        background: #222933;
        color: #d6d9dd;
        overflow: hidden;
    }

    button {
        display: flex;
        align-items: center;
        padding: 0;
        border: 0;
        background: none;
        color: inherit;
        font: inherit;
        white-space: nowrap;
    }

    svg {
        flex: none;
        display: block;
    }

    select,
    input {
        font: inherit;
        color: inherit;
        box-sizing: border-box;
    }

    p,
    ul {
        margin: 0;
        padding: 0;
        list-style: none;
    }

    .caret {
        flex: none;
        width: 0;
        border: 3px solid transparent;
        border-top: 4px solid #c9ccd0;
        border-bottom: 0;
    }

    .caret.large {
        border-width: 5px 4px 0;
    }

    .caret.up {
        border-top: 0;
        border-bottom: 4px solid #444;
    }

    .caret.side {
        margin-right: -3px;
        border: 4px solid transparent;
        border-left: 5px solid #c9ccd0;
        border-right: 0;
    }

    /* title bar */
    .titlebar {
        display: flex;
        align-items: center;
        height: 28px;
        padding-bottom: 2px;
        flex: none;
    }

    .quick {
        display: flex;
        align-items: center;
        gap: 8px;
        padding-left: 4px;
        flex: 1;
    }

    .quick button {
        gap: 6px;
    }

    .quick .app-btn {
        gap: 5px;
        margin-right: 8px;
    }

    .quick .share {
        color: #7cc4f4;
        gap: 5px;
    }

    .caption {
        display: flex;
        gap: 22px;
        color: #f0f0f0;
    }

    .account {
        display: flex;
        align-items: center;
        justify-content: flex-end;
        gap: 9px;
        flex: 1;
        padding-left: 96px;
    }

    .account button {
        gap: 6px;
    }

    .account input {
        width: 178px;
        height: 20px;
        margin-right: -2px;
        border: 0;
        padding: 0 3px;
        background: #475164;
        font-style: italic;
    }

    .account input::placeholder {
        color: #c3c8d0;
    }

    .account .login .caret {
        margin-left: 53px;
    }

    .account .help {
        border-left: 1px solid #3d4654;
        padding-left: 9px;
    }

    .sys {
        display: flex;
        gap: 10px;
        padding: 0 6px 0 68px;
    }

    /* ribbon tabs */
    .tabs {
        display: flex;
        height: 20px;
        padding: 1px 0 0 2px;
        flex: none;
    }

    .tabs button {
        padding: 1px 10px 0;
        color: #b9bdc4;
    }

    .tabs .active {
        background: #3b4453;
        color: #fff;
    }

    .tabs .collapse {
        gap: 4px;
        padding-left: 22px;
    }

    .collapse span {
        display: flex;
        padding: 2px 4px;
        background: #c4c4c4;
    }

    .ribbon {
        display: flex;
        height: 99px;
        margin-right: 1px;
        background: #3b4453;
        color: #6d747f;
        flex: none;
    }

    .panel {
        display: flex;
        flex-direction: column;
        justify-content: space-between;
        box-sizing: border-box;
        border-right: 1px solid #222933;
    }

    .draw { width: 211px; }
    .modify { width: 227px; }
    .note { width: 156px; }
    .layer { width: 252px; }
    .block { width: 134px; }
    .props { width: 244px; }
    .grp { width: 68px; }
    .util, .clip { width: 76px; }
    .view { width: 62px; border: 0; }

    .tools {
        display: flex;
        padding: 6px 2px 0;
    }

    .modify .tools { padding-left: 5px; gap: 10px; }
    .note .tools { padding-left: 6px; }
    .view .tools { padding-left: 10px; }
    .util .tools, .clip .tools { padding-left: 6px; gap: 4px; }

    .big {
        flex-direction: column;
        width: 40px;
        height: 73px;
        flex: none;
    }

    .big span {
        height: 17px;
        line-height: 17px;
    }

    .big svg {
        margin-bottom: 4px;
    }

    .big .caret {
        margin-top: 4px;
    }

    .col {
        display: flex;
        flex-direction: column;
    }

    .draw .col { padding-left: 8px; }
    .grow { flex: 1; }

    .tool {
        gap: 5px;
        height: 24px;
        padding: 0 2px;
    }

    .tool .caret {
        margin-left: 3px;
    }

    .modify .tool .caret,
    .note .tool .caret {
        margin-left: 6px;
    }

    .tool.on {
        background: #44617e;
        outline: 1px solid #6ba4d8;
        outline-offset: -1px;
    }

    .grp .tool { padding: 0 4px; }
    .grp .tools { padding-left: 1px; }

    .line {
        display: flex;
        gap: 4px;
    }

    .combo {
        position: relative;
        display: flex;
        align-items: center;
        gap: 4px;
        flex: 1;
        height: 22px;
        box-sizing: border-box;
        border: 1px solid #2b3340;
        background: #465164;
        color: #8b929d;
    }

    .combo.lit {
        flex: none;
        height: 23px;
        margin-bottom: 1px;
        padding-left: 2px;
        background: #475669;
    }

    .combo select {
        flex: 1;
        border: 0;
        padding: 0;
        height: 18px;
        appearance: none;
        background: none;
    }

    .combo .caret {
        position: absolute;
        right: 2px;
    }

    .swatch {
        width: 12px;
        height: 14px;
        border: 1px solid #2b3340;
        background: #a7aeba;
    }

    .swatch.wide {
        width: 15px;
        margin: 0 6px 0 10px;
        background: #a0a5ae;
    }

    .rule {
        width: 64px;
        height: 1px;
        margin-left: 3px;
        background: #aab0b8;
    }

    .rule + select {
        margin-left: -2px;
    }

    .prop {
        display: flex;
        align-items: center;
        gap: 3px;
        height: 24px;
        padding-left: 2px;
    }

    .props .tools { padding-right: 1px; }

    .colors {
        width: 16px;
        height: 16px;
        border-radius: 50%;
        background: conic-gradient(#ffb347 0 60deg, #f06a5a 0 130deg, #8a4fff 0 200deg, #1fb6d9 0 270deg, #43d17a 0 320deg, #ffcf4a 0);
    }

    .ptitle {
        position: relative;
        display: flex;
        align-items: center;
        justify-content: center;
        gap: 6px;
        height: 18px;
        color: #f0f1f2;
    }

    .launch {
        position: absolute;
        right: 4px;
        color: #c9ccd0;
    }

    .view .ptitle {
        justify-content: flex-start;
        padding-left: 5px;
    }

    /* follows the title instead of the panel's corner */
    .view .launch {
        position: static;
    }

    /* document tabs */
    .files {
        display: flex;
        align-items: flex-end;
        height: 26px;
        padding-left: 14px;
        border-bottom: 4px solid #3b4453;
        flex: none;
    }

    .file {
        height: 22px;
        padding: 0 16px;
        box-sizing: border-box;
        border-radius: 10px 12px 0 0;
        background: #2e3643;
        color: #c3c7cd;
    }

    .file.start {
        width: 130px;
    }

    .file.current {
        justify-content: space-between;
        width: 123px;
        background: #3b4453;
        color: #fff;
        font-weight: 700;
        padding: 0 11px 0 10px;
    }

    .file.current svg {
        color: #aaa;
        width: 12px;
    }

    .file.add {
        margin-left: 10px;
        padding: 0 3px;
        color: #aaa;
    }

    .file.add svg,
    .addlayout svg {
        width: 10px;
    }

    main {
        position: relative;
        flex: 1;
        background: #000;
        overflow: hidden;
    }

    .drawing {
        position: absolute;
        inset: 0;
    }

    .docbtns {
        position: absolute;
        right: 9px;
        top: 8px;
    }

    .cube {
        position: absolute;
        right: 23px;
        top: 46px;
        display: grid;
        grid-template: 1fr 52px 1fr / 1fr 52px 1fr;
        place-items: center;
        width: 120px;
        height: 120px;
        border-radius: 50%;
        background: radial-gradient(circle, transparent 47px, #2a2a2a 48px);
        color: #a2a2a2;
        font-size: 18px;
    }

    .n { grid-area: 1 / 2; align-self: start; margin-top: -4px; }
    .w { grid-area: 2 / 1; justify-self: start; margin-left: -6px; }
    .e { grid-area: 2 / 3; justify-self: end; margin-right: -6px; }
    .s { grid-area: 3 / 2; align-self: end; margin-bottom: -6px; }

    .face {
        grid-area: 2 / 2;
        width: 32px;
        height: 32px;
        border: 10px solid #a5a5a5;
        background: #97989d;
        color: #4a4e52;
        font-size: 28px;
        font-weight: 300;
        line-height: 30px;
        text-align: center;
    }

    .wcs {
        position: absolute;
        right: 59px;
        top: 193px;
        gap: 7px;
        height: 18px;
        padding: 0 4px;
        border-radius: 4px;
        background: #82828e;
        color: #35353c;
        font: 11px 'Liberation Sans', sans-serif;
    }

    .wcs i {
        border: 4px solid transparent;
        border-top: 5px solid #a9bac4;
        border-bottom: 0;
    }

    .navbar {
        position: absolute;
        right: 4px;
        top: 236px;
        display: flex;
        flex-direction: column;
        align-items: center;
        gap: 5px;
        width: 32px;
        height: 212px;
        box-sizing: border-box;
        border: 1px solid #505050;
        border-radius: 4px;
        background: #414141;
        color: #262626;
    }

    .navbar .caret {
        border-top-color: #222;
    }

    .navbar hr {
        width: 26px;
        margin: 0;
        border: 0;
        border-top: 1px solid #565656;
    }

    .dot {
        align-self: flex-end;
        width: 9px;
        height: 9px;
        margin: 1px;
        border-radius: 50%;
        background: #2b2b2b;
        color: #555;
        font: 10px/9px 'Liberation Sans', sans-serif;
        text-align: center;
    }

    .dot.last {
        margin: auto 1px 1px;
    }

    /* publish dialog */
    .dialog {
        position: absolute;
        left: 568px;
        top: 21px;
        width: 770px;
        background: #f0f0f0;
        color: #000;
        font-family: 'Noto Sans CJK SC', sans-serif;
    }

    .dhead {
        display: flex;
        align-items: center;
        gap: 5px;
        height: 30px;
        padding: 0 9px 0 8px;
        background: #fff;
    }

    .dhead button {
        margin-left: auto;
    }

    .dlogo {
        padding: 0 1px;
        background: #f8ece7;
    }

    .dlogo svg {
        width: 14px;
    }

    .dbody {
        padding: 0 9px 10px 12px;
        font-feature-settings: 'hwid';
    }

    .upper {
        display: flex;
        justify-content: space-between;
        height: 179px;
    }

    .left {
        display: flex;
        flex-direction: column;
        padding-top: 5px;
    }

    .left label {
        line-height: 17px;
    }

    .pick {
        display: flex;
        align-items: center;
        gap: 6px;
        height: 25px;
    }

    .drop {
        position: relative;
        width: 297px;
    }

    .drop select {
        display: block;
        width: 100%;
        height: 21px;
        padding: 0 2px;
        border: 1px solid #acacac;
        border-radius: 0;
        appearance: none;
        background: #e1e1e1;
    }

    .drop svg {
        position: absolute;
        right: 4px;
        top: 8px;
    }

    .sq {
        justify-content: center;
        width: 24px;
        height: 24px;
        box-sizing: border-box;
        border: 1px solid #adadad;
        background: #e5e5e5;
        color: #444;
    }

    .sq:disabled {
        border-color: #bfbfbf;
        background: #cccccc;
        color: #8c8c8c;
    }

    .chk {
        display: flex;
        align-items: center;
        gap: 3px;
    }

    .chk.auto {
        margin: 40px 0 6px;
    }

    input[type='checkbox'] {
        appearance: none;
        position: relative;
        flex: none;
        width: 13px;
        height: 13px;
        margin: 0;
        border: 1px solid #333;
        background: #fff;
    }

    input[type='checkbox']:disabled {
        border-color: #ccc;
    }

    input:checked::before {
        content: '';
        position: absolute;
        left: 4px;
        top: 1px;
        width: 3px;
        height: 6px;
        border: solid #222;
        border-width: 0 1px 1px 0;
        transform: rotate(42deg);
    }

    .sheetbar {
        display: flex;
        gap: 6px;
        padding-left: 1px;
    }

    .sheetbar .gap {
        margin-left: 30px;
    }

    .options {
        width: 385px;
        height: 159px;
        box-sizing: border-box;
        margin: 10px 2px 0 0;
        padding: 0 16px 0 10px;
        border: 1px solid #dcdcdc;
    }

    .options legend {
        margin-left: -6px;
        padding: 0 4px;
    }

    .options p {
        line-height: 20px;
    }

    .dim {
        color: #8a8a8a;
    }

    .options .dim {
        color: #9c9c9c;
        text-shadow: 1px 1px #fff;
    }

    .loc {
        display: flex;
        align-items: center;
        justify-content: space-between;
    }

    .loc button {
        justify-content: center;
        width: 22px;
        height: 19px;
        box-sizing: border-box;
        border: 1px solid #adadad;
        background: #e1e1e1;
    }

    .push {
        justify-content: center;
        width: 102px;
        height: 22px;
        box-sizing: border-box;
        border: 1px solid #adadad;
        background: #e1e1e1;
    }

    .push:disabled {
        width: 127px;
        margin-top: 13px;
        border-color: #bfbfbf;
        background: #ccc;
        color: #838383;
    }

    .push.primary {
        border: 2px solid #0078d7;
    }

    .list {
        display: flex;
        flex-direction: column;
        justify-content: space-between;
        height: 210px;
        box-sizing: border-box;
        border: 1px solid #828790;
        background: #fff;
    }

    table {
        width: 100%;
        border-collapse: collapse;
        table-layout: fixed;
    }

    th {
        height: 22px;
        padding: 2px 5px 0;
        border-left: 1px solid #e5e5e5;
        text-align: left;
        font-weight: 400;
    }

    th:first-child {
        border: 0;
    }

    .c1 { width: 364px; }
    .c2 { width: 62px; }
    .c3 { width: 139px; }

    td {
        height: 17px;
        padding: 0;
    }

    td div {
        display: flex;
        align-items: center;
        gap: 2px;
        height: 17px;
        padding-left: 5px;
    }

    td .far {
        gap: 8px;
        padding-left: 0;
    }

    td input[type='checkbox'] {
        display: block;
        margin-left: 14px;
    }

    .scroll {
        display: flex;
        height: 15px;
        margin: 0 1px 2px;
    }

    .scroll i {
        flex: 1;
        background: #cdcdcd;
    }

    .lower {
        display: flex;
        gap: 7px;
        margin: 6px 0 0 -1px;
    }

    .details {
        width: 284px;
        box-sizing: border-box;
        border: 1px solid #a0a0a0;
    }

    .dtitle {
        display: flex;
        justify-content: space-between;
        align-items: center;
        height: 23px;
        padding: 0 11px 0 4px;
        background: #a2a2a2;
        font-weight: 700;
        font-size: 13px;
    }

    .dtitle span {
        display: flex;
        align-items: center;
        gap: 6px;
    }

    .details ul {
        padding-bottom: 1px;
    }

    .details li {
        height: 19px;
        padding-left: 2px;
        line-height: 19px;
    }

    .output {
        display: flex;
        justify-content: flex-end;
        gap: 24px;
        flex: 1;
        box-sizing: border-box;
        margin-top: 6px;
        padding: 13px 33px 0 0;
        border: 1px solid #dcdcdc;
    }

    .checks {
        display: flex;
        flex-direction: column;
        gap: 12px;
        padding-top: 6px;
    }

    .outbtns {
        display: flex;
        flex-direction: column;
        gap: 11px;
    }

    .foot {
        display: flex;
        gap: 17px;
        margin: 13px -4px 0 0;
    }

    .hide {
        gap: 3px;
        margin-right: auto;
        padding-left: 3px;
    }

    .hide i {
        border: 5px solid transparent;
        border-bottom: 5px solid #000;
        border-top: 0;
    }

    .menu {
        position: absolute;
        left: 874px;
        top: 330px;
        width: 218px;
        box-sizing: border-box;
        padding: 2px;
        border: 1px solid #ccc;
        background: #f2f2f2;
        box-shadow: 3px 3px 3px rgba(0, 0, 0, 0.45);
        color: #000;
    }

    .menu button {
        gap: 10px;
        width: 100%;
        height: 22px;
    }

    .menu .hot {
        background: #91c9f7;
    }

    .menu button:disabled {
        color: #6d6d6d;
    }

    .menu hr {
        margin: 3px 0 3px 28px;
        border: 0;
        border-top: 1px solid #d7d7d7;
    }

    .tick {
        display: grid;
        place-items: center;
        width: 22px;
        height: 22px;
    }

    .tick.check {
        background: #91c9f7;
    }

    .pointer {
        position: absolute;
        left: 747px;
        top: 338px;
        filter: drop-shadow(2px 4px 2px rgba(0, 0, 0, 0.5));
    }

    .cursor {
        position: absolute;
        left: 1032px;
        top: 343px;
    }

    .ime {
        position: absolute;
        right: 275px;
        bottom: 26px;
        display: flex;
        align-items: center;
        gap: 4px;
        height: 25px;
        padding: 0 6px;
        border-radius: 4px;
        background: #fff;
        color: #222;
    }

    .history {
        position: absolute;
        left: 448px;
        bottom: 29px;
        display: flex;
        flex-direction: column;
        align-items: flex-start;
        gap: 5px;
        color: #a0a0a0;
        font: 12px/15px 'DejaVu Sans Mono', 'Noto Sans CJK SC', monospace;
    }

    .history p {
        padding: 0 2px;
        border-radius: 2px;
        background: #424242;
    }

    .history .old { background: #2b2b2b; color: #757575; }
    .history .mid { background: #363636; color: #8b8b8b; }

    .command {
        position: absolute;
        left: 386px;
        right: 387px;
        bottom: 1px;
        display: flex;
        height: 25px;
    }

    .cgrip {
        display: flex;
        align-items: center;
        gap: 7px;
        width: 56px;
        padding-left: 3px;
        box-sizing: border-box;
        background: #222933;
        color: #a8a8a8;
    }

    .cgrip i {
        width: 5px;
        height: 17px;
        background: repeating-linear-gradient(#aaa 0 2px, transparent 2px 3px);
    }

    .cgrip svg {
        width: 13px;
    }

    .cline {
        display: flex;
        align-items: center;
        gap: 2px;
        flex: 1;
        padding: 0 3px;
        background: #b1b1b1;
        color: #4d4d4d;
    }

    .cline .caret.large {
        border-top-color: #4d4d4d;
    }

    .cline input {
        flex: 1;
        padding: 2px 0 0;
        border: 0;
        background: none;
        color: #000;
        font: 12px 'DejaVu Sans Mono', monospace;
    }

    /* status bar */
    footer {
        display: flex;
        justify-content: space-between;
        align-items: flex-start;
        height: 30px;
        border-top: 1px solid #4b5361;
        flex: none;
    }

    .layouts {
        display: flex;
        gap: 2px;
        padding-left: 10px;
    }

    .layouts button {
        height: 17px;
        padding: 0 10px;
        border-radius: 0 0 10px 10px;
        background: #2e3643;
        color: #b3b8c0;
    }

    .layouts .active {
        padding: 0 12px;
        background: #3b4453;
        color: #fff;
        font-weight: 700;
    }

    .layouts .addlayout {
        margin-left: 2px;
        padding: 0 7px;
    }

    .statusbar {
        display: flex;
        gap: 2px;
        padding: 1px 3px 0 0;
        color: #e3e5e8;
    }

    .coords {
        width: 174px;
        padding-right: 6px;
        line-height: 24px;
        text-align: right;
        background: #3b4453;
    }

    .cell {
        height: 24px;
        background: #3b4453;
    }

    .space {
        padding: 0 3px;
    }

    .ico {
        display: grid;
        place-items: center;
        width: 23px;
        height: 24px;
    }

    .ico.on {
        background: #5f90c9;
        color: #fff;
    }

    .cell .caret {
        margin: 0 4px 0 5px;
    }

    .label {
        padding-left: 1px;
    }

    .wide .label {
        width: 50px;
        padding-left: 7px;
        text-align: left;
    }

    .watermark {
        position: absolute;
        right: 4px;
        bottom: 6px;
        display: flex;
        opacity: 0.8;
        pointer-events: none;
    }

    .watermark div {
        display: flex;
        flex-direction: column;
        margin-left: -2px;
    }

    .watermark strong {
        color: #1b5c96;
        font-size: 21px;
        line-height: 24px;
    }

    .watermark span {
        color: #3f7a45;
        font: 700 17px/18px 'Liberation Sans', sans-serif;
    }
</style>
